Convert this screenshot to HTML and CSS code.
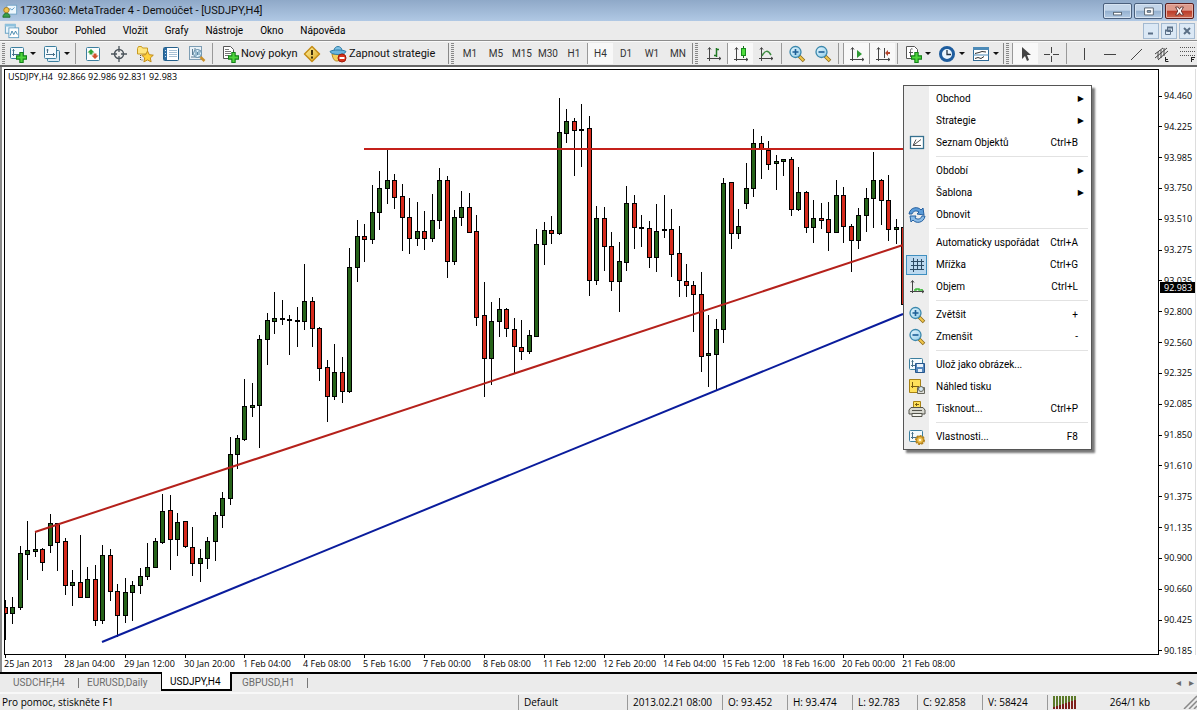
FILE: index.html
```html
<!DOCTYPE html>
<html lang="cs">
<head>
<meta charset="utf-8">
<title>1730360: MetaTrader 4 - Demoúčet - [USDJPY,H4]</title>
<link rel="stylesheet" href="styles.css">
</head>
<body>
<svg class="defs" width="0" height="0" aria-hidden="true">
  <defs>
    <linearGradient id="gLens" x1="0" y1="0" x2="1" y2="1"><stop offset="0" stop-color="#e8f8ff"/><stop offset="1" stop-color="#8fcbe8"/></linearGradient>
    <linearGradient id="gGold" x1="0" y1="0" x2="1" y2="1"><stop offset="0" stop-color="#fff2a0"/><stop offset="1" stop-color="#dfa820"/></linearGradient>
  </defs>
  <symbol id="plus" viewBox="0 0 10 10"><path d="M3.500 .5h3v3h3v3h-3v3h-3v-3h-3v-3h3z" fill="#4fd63c" stroke="#14801a"/></symbol>
  <symbol id="win" viewBox="0 0 18 18"><rect x="1.500" y="2.500" width="13" height="11" rx="1" fill="#f4fafd" stroke="#3c7f9f"/><path d="M4.500 4v7M3 9.500h9M3.500 5.500l1-1 1 1M11 8.500l1 1-1 1" fill="none" stroke="#48718a"/></symbol>
  <symbol id="newchart" viewBox="0 0 18 18"><use href="#win" width="18" height="18"/><use href="#plus" x="7" y="7" width="11" height="11"/></symbol>
  <symbol id="profiles" viewBox="0 0 18 18"><rect x="4.500" y="5.500" width="12" height="11" rx="1" fill="#dcecf5" stroke="#3c7f9f"/><rect x="1.500" y="1.500" width="12" height="12" rx="1" fill="#f4fafd" stroke="#3c7f9f"/><path d="M4.500 4v4M3.500 5h2M3 9.500h9M10.500 8v3" fill="none" stroke="#48718a"/></symbol>
  <symbol id="market" viewBox="0 0 18 18"><rect x="2.500" y="2.500" width="13" height="13" rx="1" fill="#fbfdfe" stroke="#3c7f9f"/><path d="M7 4l3.500 3.500H8.500v2h-3v-2h-2z" fill="#2fa437"/><path d="M11 14l-3.500-3.500h2v-2h3v2h2z" fill="#d0512a"/></symbol>
  <symbol id="target" viewBox="0 0 18 18"><circle cx="9" cy="9" r="4.500" fill="none" stroke="#4c555c" stroke-width="1.500"/><path d="M9 1v6M9 11v6M1 9h6M11 9h6" stroke="#4c555c" stroke-width="1.300"/></symbol>
  <symbol id="navi" viewBox="0 0 18 18"><path d="M1.500 3.500l1-2h3l1 1.500h5v6h-10z" fill="#ffe680" stroke="#c79a22"/><path d="M4.500 10v5h3" fill="none" stroke="#555" stroke-dasharray="1 1"/><path d="M11.500 6l1.800 3.700 4 .5-3 2.700.8 4-3.600-2-3.600 2 .8-4-3-2.700 4-.5z" fill="#ffd23c" stroke="#c08a18"/></symbol>
  <symbol id="terminal" viewBox="0 0 18 18"><rect x="1.500" y="2.500" width="15" height="13" rx="1" fill="#fff" stroke="#24608c"/><path d="M2 3h3v12H2z" fill="#2d6da3"/><path d="M7 5.500h8M7 7.500h8M7 9.500h8M7 11.500h8" stroke="#a7c0d4"/><path d="M3 5.500h1M3 8.500h1M3 11.500h1" stroke="#cfe2f0"/></symbol>
  <symbol id="tester" viewBox="0 0 18 18"><rect x="1.500" y="1.500" width="12" height="13" fill="#eaf2f7" stroke="#7d9db3"/><path d="M3 12h9M4.500 4v6M7 3v5" stroke="#5c7d94"/><circle cx="9.500" cy="8.500" r="4" fill="#d9effa" stroke="#5b87a3"/><path d="M8 6v5M9.500 7v3M11 6v4" stroke="#5b87a3"/><path d="M12.500 12l4 4" stroke="#c9902b" stroke-width="2.500"/></symbol>
  <symbol id="order" viewBox="0 0 18 18"><path d="M2.500 1.500h7l3 3v9h-10z" fill="#fff" stroke="#555"/><path d="M4 4.500h4M4 6.500h6M4 8.500h6M4 10.500h4" stroke="#777"/><use href="#plus" x="7" y="7" width="11" height="11"/></symbol>
  <symbol id="warn" viewBox="0 0 18 18"><path d="M9 1.500L16.500 9 9 16.500 1.500 9z" fill="url(#gGold)" stroke="#c58d16" stroke-linejoin="round" stroke-width="1.500"/><path d="M9 5v5M9 11.500v2" stroke="#40300a" stroke-width="2"/></symbol>
  <symbol id="expert" viewBox="0 0 18 18"><path d="M3 9c1 6 3 7 5 7s5-1 6-7z" fill="#f4cf5c" stroke="#b98921"/><path d="M5 6c0-6 8-6 8 0" fill="#7fc3e6" stroke="#2f7ca6"/><path d="M1 6.500c2-2 14-2 16 0-1 4-15 4-16 0z" fill="#6ab4dc" stroke="#2f7ca6"/><circle cx="13" cy="13" r="4" fill="#d8321c" stroke="#a01c0c"/><path d="M10.500 13h5" stroke="#fff" stroke-width="2"/></symbol>
  <symbol id="bars" viewBox="0 0 18 18"><path d="M4.500 3v13M2 13.500h14M3 4.500l1.500-2L6 4.500M14 12l2 1.500L14 15" fill="none" stroke="#444"/><path d="M11.500 3v9M9 10.500h2M12 4.500h2" stroke="#207a24" stroke-width="1.500"/></symbol>
  <symbol id="candles" viewBox="0 0 18 18"><path d="M4.500 3v13M2 14.500h14M3 4.500l1.500-2L6 4.500M14 13l2 1.500L14 16" fill="none" stroke="#444"/><path d="M11.500 1v12" stroke="#1a6d1e"/><rect x="9.500" y="3.500" width="4" height="7" fill="#4fdc3e" stroke="#178a1c"/></symbol>
  <symbol id="linechart" viewBox="0 0 18 18"><path d="M4.500 3v13M2 13.500h14M3 4.500l1.500-2L6 4.500M14 12l2 1.500L14 15" fill="none" stroke="#444"/><path d="M5 11c3-6 6-6 9-1" fill="none" stroke="#3d8b40" stroke-width="1.500"/></symbol>
  <symbol id="zin" viewBox="0 0 18 18"><path d="M11 11l5 5" stroke="#8a6a1c" stroke-width="3.500"/><path d="M11.500 11.500l4 4" stroke="#f2c84b" stroke-width="2"/><circle cx="7.500" cy="7" r="5.500" fill="url(#gLens)" stroke="#3b88ad" stroke-width="1.300"/><path d="M7.500 4v6M4.500 7h6" stroke="#1e5f96" stroke-width="1.600"/></symbol>
  <symbol id="zout" viewBox="0 0 18 18"><path d="M11 11l5 5" stroke="#8a6a1c" stroke-width="3.500"/><path d="M11.500 11.500l4 4" stroke="#f2c84b" stroke-width="2"/><circle cx="7.500" cy="7" r="5.500" fill="url(#gLens)" stroke="#3b88ad" stroke-width="1.300"/><path d="M4.500 7h6" stroke="#1e5f96" stroke-width="1.600"/></symbol>
  <symbol id="scroll" viewBox="0 0 18 18"><path d="M4.500 3v13M2 14.500h14M3 4.500l1.500-2L6 4.500M14 13l2 1.500L14 16" fill="none" stroke="#444"/><path d="M9 5l5 4-5 4z" fill="#2f9a34"/></symbol>
  <symbol id="shift" viewBox="0 0 18 18"><path d="M4.500 3v13M2 14.500h14M3 4.500l1.500-2L6 4.500M14 13l2 1.500L14 16M10.500 3v10" fill="none" stroke="#444"/><path d="M11 8l3-3v2h2v2h-2v2z" fill="#b3452c"/></symbol>
  <symbol id="indic" viewBox="0 0 18 18"><path d="M2.500 1.500h8l3 3v9h-11z" fill="#fff" stroke="#555"/><path d="M8.500 4c-2-1-2 1-2 3v5M5 7.500h4" fill="none" stroke="#555"/><use href="#plus" x="7" y="7" width="11" height="11"/></symbol>
  <symbol id="clock" viewBox="0 0 18 18"><circle cx="9" cy="9" r="6.500" fill="#eaf5fd" stroke="#1e5d9e" stroke-width="3"/><path d="M9 5v4.500h4" fill="none" stroke="#234" stroke-width="1.300"/></symbol>
  <symbol id="templ" viewBox="0 0 18 18"><rect x="1.500" y="2.500" width="15" height="13" fill="#fff" stroke="#2f6a96"/><path d="M1 2h16v3H1zM1 9.500h16v1H1z" fill="#4d8bb8"/><path d="M3 8.500l4-1 3-1 4 .5M3 13.500l3-1 3 1 3-2" fill="none" stroke="#333"/></symbol>
  <symbol id="cursor" viewBox="0 0 18 18"><path d="M5 2v12l3-3 2 5 2-1-2-5h4z" fill="#444"/></symbol>
  <symbol id="cross" viewBox="0 0 18 18"><path d="M9.500 2v6M9.500 11v6M2 9.500h6M11 9.500h6" stroke="#444"/></symbol>
  <symbol id="vline" viewBox="0 0 18 18"><path d="M9.500 3v12" stroke="#444"/></symbol>
  <symbol id="hline" viewBox="0 0 18 18"><path d="M3 9.500h12" stroke="#444"/></symbol>
  <symbol id="dline" viewBox="0 0 18 18"><path d="M4 15L15 4" stroke="#444"/></symbol>
  <symbol id="channel" viewBox="0 0 18 18"><path d="M2 13L14 3M2 9l8-6M5 15L15 6M5 7v7M8 5v8M11 3v8" stroke="#444"/><path d="M12.500 12v4.500h3M12 14.500h3" fill="none" stroke="#222"/></symbol>
  <symbol id="fibo" viewBox="0 0 18 18"><path d="M1 2.500h16M1 6.500h16M1 10.500h16" stroke="#555" stroke-dasharray="1 1"/><path d="M12.500 12v5M12 12.500h4M12 14.500h3" stroke="#222"/></symbol>
  <symbol id="objects" viewBox="0 0 18 18"><rect x="2.500" y="2.500" width="13" height="12" fill="#fff" stroke="#35708f" stroke-width="1.300"/><path d="M5 11.500l3-6M5 11.500l8-6M5 11.500h8" stroke="#555"/></symbol>
  <symbol id="refresh" viewBox="0 0 18 18"><path d="M1 8c1-7 9-8 12-4l2-2 1 7-7-1 2-2c-3-2-6-1-7 2z" fill="#5b9bd8" stroke="#2560a0"/><path d="M17 10c-1 7-9 8-12 4l-2 2-1-6 6 0-1 2c3 2 6 1 7-2z" fill="#8bbce8" stroke="#2560a0"/></symbol>
  <symbol id="grid" viewBox="0 0 18 18"><path d="M5.500 2v14M9.500 3v11M13.500 3v11M3 5.500h13M3 9.500h13M2 13.500h14" stroke="#2c4a63"/></symbol>
  <symbol id="volume" viewBox="0 0 18 18"><path d="M4.500 3v12M2 13.500h14M3 4.500l1.500-2L6 4.500M14 12l2 1.500L14 15" fill="none" stroke="#444"/><path d="M6 12h2v-1h3v1h3v-1" fill="none" stroke="#3dbb3a" stroke-width="1.500"/></symbol>
  <symbol id="save" viewBox="0 0 18 18"><use href="#win" width="18" height="18"/><path d="M7.500 7.500h9v9h-9z" fill="#5487bd" stroke="#26568c"/><path d="M9 8h6v3H9zM10 13h4v3h-4z" fill="#e8f1fa"/></symbol>
  <symbol id="preview" viewBox="0 0 18 18"><path d="M1.500 1.500h11v13h-11z" fill="#ffe15a" stroke="#a88214"/><path d="M4.500 4v6M3 8.500h8" stroke="#7a5d10"/><path d="M9.500 9.500h7v6h-7z" fill="#e0e0da" stroke="#66665c"/><circle cx="13" cy="11" r="2.500" fill="#d4e6f0" stroke="#66665c"/></symbol>
  <symbol id="print" viewBox="0 0 18 18"><path d="M5.500 1.500h7v6h-7z" fill="#ffe15a" stroke="#a88214"/><path d="M8.500 3v3M7 4.500h4" stroke="#7a5d10"/><path d="M3 7.500h12l2 2.500v4H1v-4z" fill="#d8d8d0" stroke="#55554c"/><path d="M4 10.500h10M4 13.500h10v3H4z" fill="#f4f4ee" stroke="#55554c"/></symbol>
  <symbol id="props" viewBox="0 0 18 18"><use href="#win" width="18" height="18"/><circle cx="12" cy="12" r="4" fill="#f0c04a" stroke="#b07f1c" stroke-width="2" stroke-dasharray="2 1"/><circle cx="12" cy="12" r="3.500" fill="#f0c04a" stroke="#b07f1c"/><circle cx="12" cy="12" r="1.300" fill="#fff7dc"/></symbol>
  <symbol id="app" viewBox="0 0 18 18"><rect x="5.500" y="2.500" width="11" height="10" fill="#eef7fd" stroke="#6fa3c6"/><path d="M7 9l2-3 2 2 3-3" fill="none" stroke="#4a90c0"/><circle cx="5" cy="8" r="3" fill="#f2c24a" stroke="#a87818"/><path d="M1 16c0-6 8-6 8 0z" fill="#3aa04a" stroke="#1c6a2c"/></symbol>
  <symbol id="mdi" viewBox="0 0 18 18"><rect x="1.500" y="1.500" width="11" height="10" fill="#eaf5fc" stroke="#5d9cc0"/><path d="M1 1h12v3H1z" fill="#8ec1dd"/><rect x="5.500" y="5.500" width="11" height="11" fill="#fff" stroke="#5d9cc0"/><path d="M7 14l2-5 2 4 2-4 2 4" fill="none" stroke="#3a7fa8"/></symbol>
</svg>

<div class="window">
  <header class="titlebar">
    <svg class="ico16"><use href="#app"/></svg>
    <h1>1730360: MetaTrader 4 - Demoúčet - [USDJPY,H4]</h1>
    <div class="winbtns">
      <button aria-label="Minimalizovat"><svg viewBox="0 0 28 16"><rect x="9.500" y="9.500" width="9" height="3" fill="#fff" stroke="#4d5966"/></svg></button>
      <button aria-label="Obnovit"><svg viewBox="0 0 28 16"><path d="M9.500 4.500h10v8h-10zM12.500 7.500h4v2h-4z" fill="#fff" fill-rule="evenodd" stroke="#4d5966"/></svg></button>
      <button class="close" aria-label="Zavřít"><svg viewBox="0 0 28 16"><path d="M9.500 3.500h3L14 6l1.500-2.500h3L16 8l2.500 4.500h-3L14 10l-1.500 2.500h-3L12 8z" fill="#fff" stroke="#5a2a28"/></svg></button>
    </div>
  </header>

  <nav class="menubar">
    <svg class="ico16"><use href="#mdi"/></svg>
    <button>Soubor</button><button>Pohled</button><button>Vložit</button><button>Grafy</button><button>Nástroje</button><button>Okno</button><button>Nápověda</button>
    <div class="mdibtns">
      <button aria-label="Minimalizovat graf"><svg viewBox="0 0 14 14"><path d="M4 9.500h5" stroke="#5a6f86" stroke-width="2"/></svg></button>
      <button aria-label="Obnovit graf"><svg viewBox="0 0 14 14"><path d="M5.500 3.500h5v4h-5zM3.500 6.500h5v4h-5z" fill="#dbe8f5" stroke="#5a6f86"/><path d="M5 3.500h6M3 6.500h6" stroke="#5a6f86" stroke-width="2"/></svg></button>
      <button aria-label="Zavřít graf"><svg viewBox="0 0 14 14"><path d="M4 4l6 6M10 4l-6 6" stroke="#5a6f86" stroke-width="2"/></svg></button>
    </div>
  </nav>

  <div class="toolbar">
    <span class="grip first"></span>
    <button class="tb drop" aria-label="Nový graf"><svg><use href="#newchart"/></svg></button>
    <button class="tb drop" aria-label="Profily"><svg><use href="#profiles"/></svg></button>
    <span class="sep wide"></span>
    <button class="tb" aria-label="Tržní nabídka"><svg><use href="#market"/></svg></button>
    <button class="tb" aria-label="Datové okno"><svg><use href="#target"/></svg></button>
    <button class="tb" aria-label="Navigátor"><svg><use href="#navi"/></svg></button>
    <button class="tb" aria-label="Terminál"><svg><use href="#terminal"/></svg></button>
    <button class="tb" aria-label="Tester strategií"><svg><use href="#tester"/></svg></button>
    <span class="sep wide"></span>
    <button class="tb text order"><svg><use href="#order"/></svg>Nový pokyn</button>
    <button class="tb" aria-label="MetaEditor"><svg><use href="#warn"/></svg></button>
    <button class="tb text expert"><svg><use href="#expert"/></svg>Zapnout strategie</button>
    <span class="grip"></span>
    <button class="tb tf">M1</button><button class="tb tf">M5</button><button class="tb tf">M15</button><button class="tb tf">M30</button><button class="tb tf">H1</button><button class="tb tf on">H4</button><button class="tb tf">D1</button><button class="tb tf">W1</button><button class="tb tf">MN</button>
    <span class="grip"></span>
    <button class="tb" aria-label="Sloupcový graf"><svg><use href="#bars"/></svg></button>
    <button class="tb on" aria-label="Svíčkový graf"><svg><use href="#candles"/></svg></button>
    <button class="tb" aria-label="Čárový graf"><svg><use href="#linechart"/></svg></button>
    <span class="sep"></span>
    <button class="tb" aria-label="Zvětšit"><svg><use href="#zin"/></svg></button>
    <button class="tb" aria-label="Zmenšit"><svg><use href="#zout"/></svg></button>
    <span class="sep wide"></span>
    <button class="tb on" aria-label="Automatický posun"><svg><use href="#scroll"/></svg></button>
    <button class="tb on" aria-label="Odsazení grafu"><svg><use href="#shift"/></svg></button>
    <span class="sep"></span>
    <button class="tb drop" aria-label="Indikátory"><svg><use href="#indic"/></svg></button>
    <button class="tb drop" aria-label="Období"><svg><use href="#clock"/></svg></button>
    <button class="tb drop" aria-label="Šablony"><svg><use href="#templ"/></svg></button>
    <span class="grip"></span>
    <button class="tb on" aria-label="Kurzor"><svg><use href="#cursor"/></svg></button>
    <button class="tb" aria-label="Kříž"><svg><use href="#cross"/></svg></button>
    <span class="sep wide"></span>
    <button class="tb" aria-label="Svislá čára"><svg><use href="#vline"/></svg></button>
    <button class="tb" aria-label="Vodorovná čára"><svg><use href="#hline"/></svg></button>
    <button class="tb" aria-label="Trendová čára"><svg><use href="#dline"/></svg></button>
    <button class="tb" aria-label="Kanál"><svg><use href="#channel"/></svg></button>
    <button class="tb" aria-label="Fibonacci"><svg><use href="#fibo"/></svg></button>
  </div>

  <main class="chart">
    <div class="plot">
      <svg id="plot" role="img" aria-label="Svíčkový graf USDJPY,H4"></svg>
      <p class="quote">USDJPY,H4&nbsp; 92.866 92.986 92.831 92.983</p>
    </div>
    <div class="prices">
      <ol>
        <li>94.460</li><li>94.225</li><li>93.985</li><li>93.750</li><li>93.510</li><li>93.275</li><li>93.035</li><li>92.800</li><li>92.560</li><li>92.325</li><li>92.085</li><li>91.850</li><li>91.610</li><li>91.375</li><li>91.135</li><li>90.900</li><li>90.660</li><li>90.425</li><li>90.185</li>
      </ol>
      <span class="last">92.983</span>
    </div>
    <svg id="times" class="times"></svg>
  </main>

  <nav class="tabs">
    <button class="t1">USDCHF,H4</button><button class="t2">EURUSD,Daily</button><button class="active">USDJPY,H4</button><button class="t4">GBPUSD,H1</button>
    <span class="arrows"><button aria-label="Doleva">◂</button><button aria-label="Doprava">▸</button></span>
  </nav>

  <footer class="status">
    <span class="help">Pro pomoc, stiskněte F1</span>
    <span class="c-profile">Default</span>
    <span class="c-time">2013.02.21 08:00</span>
    <span class="c-num">O: 93.452</span>
    <span class="c-num">H: 93.474</span>
    <span class="c-num">L: 92.783</span>
    <span class="c-num">C: 92.858</span>
    <span class="c-num">V: 58424</span>
    <span class="c-net"><svg id="signal" width="24" height="13"></svg><b>264/1 kb</b><svg class="size" width="14" height="14" viewBox="0 0 14 14"><path d="M1 14L14 1M6 14l8-8M11 14l3-3" stroke="#888" stroke-width="1.500"/></svg></span>
  </footer>
</div>

<div class="popup" role="menu">
  <button role="menuitem"><i></i>Obchod<em>▶</em></button>
  <button role="menuitem"><i></i>Strategie<em>▶</em></button>
  <button role="menuitem"><i><svg><use href="#objects"/></svg></i>Seznam Objektů<kbd>Ctrl+B</kbd></button>
  <hr>
  <button role="menuitem"><i></i>Období<em>▶</em></button>
  <button role="menuitem"><i></i>Šablona<em>▶</em></button>
  <button role="menuitem"><i><svg><use href="#refresh"/></svg></i>Obnovit</button>
  <hr>
  <button role="menuitem"><i></i>Automaticky uspořádat<kbd>Ctrl+A</kbd></button>
  <button role="menuitem"><i class="checked"><svg><use href="#grid"/></svg></i>Mřížka<kbd>Ctrl+G</kbd></button>
  <button role="menuitem"><i><svg><use href="#volume"/></svg></i>Objem<kbd>Ctrl+L</kbd></button>
  <hr>
  <button role="menuitem"><i><svg><use href="#zin"/></svg></i>Zvětšit<kbd>+</kbd></button>
  <button role="menuitem"><i><svg><use href="#zout"/></svg></i>Zmenšit<kbd>-</kbd></button>
  <hr>
  <button role="menuitem"><i><svg><use href="#save"/></svg></i>Ulož jako obrázek...</button>
  <button role="menuitem"><i><svg><use href="#preview"/></svg></i>Náhled tisku</button>
  <button role="menuitem"><i><svg><use href="#print"/></svg></i>Tisknout...<kbd>Ctrl+P</kbd></button>
  <hr>
  <button role="menuitem"><i><svg><use href="#props"/></svg></i>Vlastnosti...<kbd>F8</kbd></button>
</div>
<script src="chart.js"></script>
</body>
</html>
```

FILE: styles.css
```css
* { box-sizing: border-box; }
body { margin: 0; font: 11px/14px Roboto, "Open Sans", sans-serif; color: #111; background: #ebebeb; }
button { font: inherit; color: inherit; background: none; border: 0; padding: 0; margin: 0; white-space: nowrap; }
.defs { position: absolute; }
.window { display: flex; flex-direction: column; height: 100vh; overflow: hidden; }
.ico16 { width: 16px; height: 16px; flex: none; }

.titlebar { display: flex; align-items: center; height: 21px; flex: none; padding: 0 3px 0 2px; background: linear-gradient(#8fa9c8, #b0c8e4); }
.titlebar h1 { flex: 1; margin: 0 0 0 2px; font: 11px/20px Roboto, "Open Sans", sans-serif; color: #111; }
.winbtns { display: flex; gap: 2px; }
.winbtns button { width: 29px; height: 16px; border: 1px solid #4a5f7c; border-radius: 2px; background: linear-gradient(#c3d5e9 45%, #94b0cf 50%, #b4cbe4); box-shadow: inset 0 0 0 1px #d6e3f1; }
.winbtns svg { display: block; width: 27px; height: 14px; }
.winbtns .close { border-color: #5a1c1c; background: linear-gradient(#dd9a8c 45%, #bb3a28 50%, #cc6a50); box-shadow: inset 0 0 0 1px #e5b0a6; }

.menubar { display: flex; align-items: center; height: 20px; flex: none; padding: 0 2px 0 4px; gap: 17px; border-bottom: 1px solid #8d8d8d; background: #ebebeb; font-size: 10px; color: #000; }
.menubar > .ico16 { margin-right: -11px; }
.mdibtns { display: flex; gap: 2px; margin-left: auto; }
.mdibtns button { width: 16px; height: 16px; border: 1px solid #a3b9d0; background: #dbe8f5; }
.mdibtns svg { display: block; width: 14px; height: 14px; }

.toolbar { display: flex; align-items: stretch; height: 26px; flex: none; padding: 1px 0; border-top: 1px solid #fafafa; border-bottom: 2px solid #666; background: #ebebeb; overflow: hidden; }
.tb { display: flex; flex: none; align-items: center; justify-content: center; width: 26px; height: 21px; }
.tb svg { width: 18px; height: 18px; flex: none; }
.tb.drop { width: 34px; justify-content: flex-start; padding-left: 4px; gap: 3px; }
.tb.drop::after { content: ""; border: 3px solid transparent; border-top-color: #111; border-bottom: 0; }
.tb.text { justify-content: flex-start; gap: 2px; padding-left: 4px; }
.tb.order { width: 82px; }
.tb.expert { width: 122px; }
.tb.tf { color: #333; font-size: 10px; }
.tb.on { background: #f8f8f8; border-left: 1px solid #999; }
.sep { width: 5px; flex: none; background: linear-gradient(#999, #999) 2px 0 / 1px 100% no-repeat; }
.sep.wide { width: 7px; }
.grip { width: 10px; flex: none; background: linear-gradient(#888, #888) 1px 0 / 1px 100% no-repeat, repeating-linear-gradient(#888 0 1px, transparent 1px 2px) 4px 0 / 3px 100% no-repeat; }
.grip.first { width: 5px; background: repeating-linear-gradient(#888 0 1px, transparent 1px 2px) 2px 0 / 3px 100% no-repeat; }

.chart { flex: 1; min-height: 0; display: grid; grid-template-columns: 1fr 37px; grid-template-rows: 1fr 17px; padding: 2px 1px 0 2px; border-left: 2px solid #8c8c8c; background: #fff; font: 500 9px/12px "Open Sans", sans-serif; color: #000; }
.plot { position: relative; min-width: 0; min-height: 0; border: 1px solid #000; overflow: hidden; }
.plot svg { display: block; width: 100%; height: 100%; }
.quote { position: absolute; left: 3px; top: 1px; margin: 0; }
.prices { position: relative; min-height: 0; border-right: 1px solid #ddd; }
.prices ol { display: flex; flex-direction: column; justify-content: space-between; height: calc(100% + 2px); margin: 0; padding: 21px 0 0; list-style: none; }
.prices li { display: flex; align-items: center; gap: 2px; height: 12px; }
.prices li::before { content: ""; width: 3px; height: 1px; background: #000; }
.prices .last { position: absolute; left: 1px; right: 0; top: 213px; height: 11px; line-height: 11px; padding-left: 4px; background: #000; color: #fff; }
.times { grid-column: 1 / 3; width: 100%; height: 17px; }

.tabs { display: flex; flex: none; height: 20px; border-top: 2px solid #000; background: #ebebeb; font-size: 10px; color: #6b6b6b; }
.tabs > button { padding: 0 10px; text-align: left; height: 17px; }
.tabs .t1 { width: 79px; padding-left: 13px; background: linear-gradient(#777, #777) 100% 4px / 1px 10px no-repeat; }
.tabs .t2 { width: 82px; padding-left: 8px; }
.tabs .t4 { width: 76px; background: linear-gradient(#777, #777) 100% 4px / 1px 10px no-repeat; }
.tabs .active { width: 71px; padding: 2px 8px 0; margin-top: -2px; height: 19px; background: #fff; color: #000; border: solid #000; border-width: 0 2px 2px 1px; }
.arrows { margin-left: auto; display: flex; gap: 8px; padding-right: 3px; }

.status { display: flex; align-items: center; flex: none; height: 18px; border-top: 2px solid #f8f8f8; background: #ebebeb; font: 10px/16px "Open Sans", sans-serif; color: #000; }
.status > span { border-left: 1px solid #999; padding-left: 5px; height: 15px; line-height: 15px; white-space: nowrap; flex: none; }
.status > .help { flex: 1; border: 0; padding-left: 2px; }
.c-profile { width: 109px; }
.c-time { width: 95px; }
.c-num { width: 65px; }
.status > .c-net { display: flex; justify-content: space-between; width: 150px; }
.c-net b { font-weight: 400; }
.c-net #signal { margin-top: 1px; }

.popup { position: absolute; top: 85px; right: 105px; width: 189px; padding: 2px 1px 1px; border: 1px solid #555; background: linear-gradient(90deg, #ededed 25px, #fff 25px); box-shadow: 3px 3px 2px #777; color: #000; font-size: 10px; }
.popup button { display: flex; align-items: center; width: 100%; height: 22px; padding-right: 12px; }
.popup i { display: grid; place-items: center; flex: none; width: 21px; height: 20px; margin: 0 9px 0 1px; }
.popup i.checked { border: 1px solid #3f8fc0; background: #bcd9ef; }
.popup svg { width: 18px; height: 18px; }
.popup kbd { margin-left: auto; font: inherit; }
.popup em { margin-left: auto; margin-right: -6px; font: 8px/10px "DejaVu Sans", sans-serif; }
.popup hr { height: 1px; margin: 2px 2px 3px 31px; border: 0; background: #e2e2e2; }
```

FILE: chart.js
```javascript
// Each candle: high, low, body top, body bottom, colour (G rising, R falling), in chart pixels.
const candles = `600,639,607,613,R 597,623,607,613,G 546,609,553,607,G 521,579,550,554,G 532,556,549,551,G
548,570,549,562,R 514,552,523,545,G 523,570,523,542,R 538,594,541,585,R 570,605,582,585,G
535,597,582,597,R 567,597,579,597,G 565,625,579,620,R 545,623,555,620,G 549,600,555,591,R
584,636,591,615,R 578,622,592,615,G 581,620,585,592,G 568,593,576,585,G 543,579,567,576,G
538,567,541,567,G 494,543,511,542,G 495,569,510,539,R 513,555,522,539,G 521,547,521,546,R
527,575,547,563,R 549,581,558,563,G 537,568,541,558,G 512,560,515,541,G 492,527,498,515,G
437,504,454,498,G 435,468,438,454,G 379,440,406,439,G 383,416,405,407,G 335,447,339,405,G
313,364,320,339,G 292,333,318,321,G 300,324,318,319,G 315,354,319,320,R 307,346,320,321,G
264,329,301,321,G 297,346,301,328,R 327,380,328,368,R 360,421,367,396,R 344,399,372,396,G
357,402,372,391,R 248,392,267,391,G 220,281,236,267,G 224,261,236,239,R 185,243,212,239,G
171,229,188,212,G 150,203,180,188,G 174,208,180,197,R 184,250,196,217,R 198,253,217,238,R
202,245,231,238,G 211,249,231,238,R 194,241,220,238,G 168,228,180,220,G 176,277,180,261,R
210,264,217,261,G 191,225,207,217,G 193,232,207,232,R 215,325,231,317,R 282,396,315,358,R
302,384,321,358,G 298,336,309,321,G 308,336,309,328,R 318,372,329,346,R 320,359,347,351,R
330,353,335,351,G 229,336,244,336,G 222,264,230,244,G 216,243,230,233,R 98,234,132,233,G
109,142,121,133,G 118,175,121,130,R 104,166,129,130,G 116,295,128,280,R 206,284,218,280,G
207,270,218,246,R 232,290,246,281,R 242,311,261,281,G 186,270,203,262,G 195,248,203,227,R
215,246,227,228,G 221,267,228,257,R 204,271,231,257,G 195,237,229,230,G 209,276,229,254,R
226,296,253,280,R 264,296,281,285,R 281,331,285,294,R 272,371,294,356,R 315,386,353,355,G
319,389,329,354,G 178,342,183,329,G 182,248,182,233,R 209,238,226,233,G 163,208,188,203,G
129,196,143,188,G 136,178,143,149,R 141,169,150,164,R 155,189,161,163,G 159,175,159,161,G
157,215,159,209,R 167,210,192,209,G 191,232,192,227,R 200,242,218,227,G 203,228,218,220,R
202,250,219,232,R 180,232,195,232,G 187,242,195,226,R 224,271,226,240,R 208,248,215,240,G
188,231,198,215,G 152,227,180,198,G 179,224,180,200,R 175,240,200,229,R 219,243,227,229,G
224,312,227,304,R`.split(/\s+/).map(c => c.split(','));

const NS = 'http://www.w3.org/2000/svg';
const STEP = 898 / 120;
const TOP = 70;
const LEFT = 5;

function add(parent, name, attrs, text) {
  const el = document.createElementNS(NS, name);
  for (const key in attrs) el.setAttribute(key, attrs[key]);
  if (text) el.textContent = text;
  parent.appendChild(el);
}

const plot = document.getElementById('plot');
candles.forEach(([high, low, top, bottom, tone], i) => {
  const x = Math.round(i * STEP);
  add(plot, 'rect', { x, y: high - TOP, width: 1, height: low - high + 1, fill: '#000' });
  add(plot, 'rect', {
    x: x - 1.5, y: top - TOP + 0.5, width: 4, height: Math.max(bottom - top, 0.5),
    fill: tone === 'G' ? '#266319' : '#d62a1c', stroke: '#000'
  });
});

[[35, 532, 903, 245, '#b5211b'], [364, 149, 903, 149, '#c4201a'], [102, 642, 903, 314, '#0a1c9c']]
  .forEach(([x1, y1, x2, y2, stroke]) =>
    add(plot, 'line', { x1: x1 - LEFT, y1: y1 - TOP, x2: x2 - LEFT, y2: y2 - TOP, stroke, 'stroke-width': 2 }));

const times = document.getElementById('times');
['25 Jan 2013', '28 Jan 04:00', '29 Jan 12:00', '30 Jan 20:00', '1 Feb 04:00', '4 Feb 08:00', '5 Feb 16:00',
  '7 Feb 00:00', '8 Feb 08:00', '11 Feb 12:00', '12 Feb 20:00', '14 Feb 04:00', '15 Feb 12:00', '18 Feb 16:00',
  '20 Feb 00:00', '21 Feb 08:00'].forEach((label, i) => {
  const x = Math.round(i * 8 * STEP) + 1;
  add(times, 'rect', { x, y: 0, width: 1, height: 3, fill: '#000' });
  add(times, 'text', { x: x - 1, y: 12 }, label);
});

const signal = document.getElementById('signal');
for (let i = 0; i < 8; i++) {
  add(signal, 'rect', { x: i * 3, y: 0, width: 2, height: 11 - i, fill: '#5d7a2a' });
  add(signal, 'rect', { x: i * 3, y: 11 - i, width: 2, height: i + 2, fill: '#7d1f1a' });
}
```
